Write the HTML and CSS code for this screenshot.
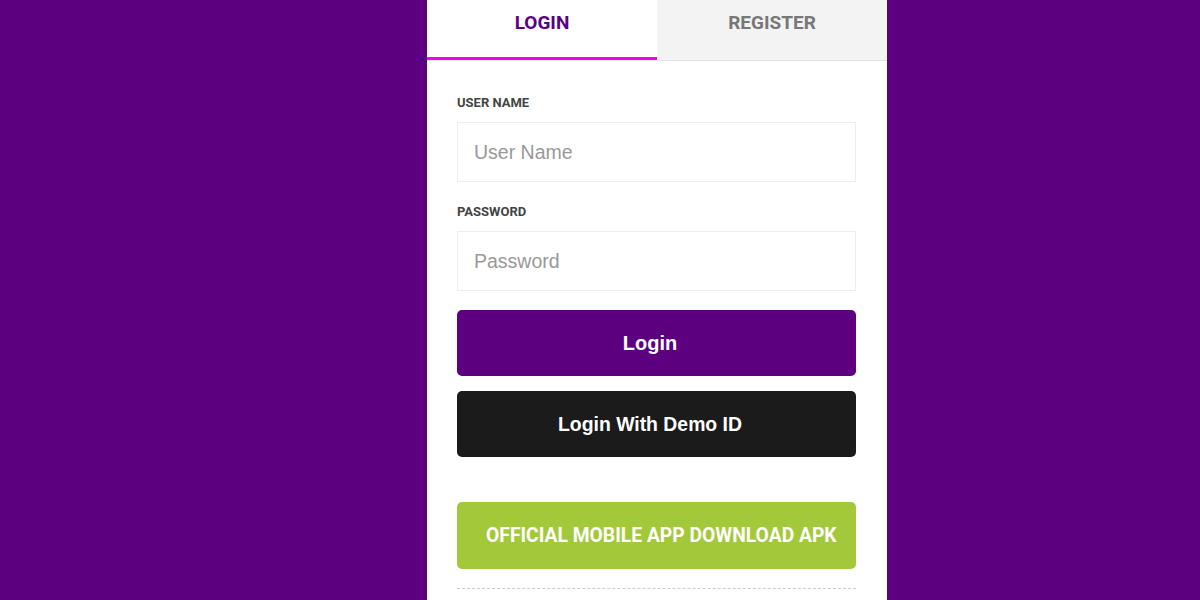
FILE: index.html
```html
<!DOCTYPE html>
<html lang="en">
<head>
  <meta charset="UTF-8" />
  <meta name="viewport" content="width=device-width, initial-scale=1.0"/>
  <title>Login / Register</title>
  <link rel="stylesheet" href="styles.css">
</head>
<body>
  <div class="page">
    <div class="card">
      <!-- Tabs -->
      <div class="tabs">
        <div class="tab active">LOGIN</div>
        <div class="tab">REGISTER</div>
      </div>

      <!-- Login form -->
      <div class="form">
        <label for="username">USER NAME</label>
        <input type="text" id="username" placeholder="User Name" />
        <label for="password">PASSWORD</label>
        <input type="password" id="password" placeholder="Password" />
        <button class="btn btn-login">Login</button>
        <button class="btn btn-demo">Login With Demo ID</button>
        <button class="btn btn-apk">OFFICIAL MOBILE APP DOWNLOAD APK</button>
        <div class="divider"></div>
      </div>
    </div>
  </div>
</body>
</html>
```
FILE: styles.css
```css
    * {
      box-sizing: border-box;
    }

    html, body {
      margin: 0;
      padding: 0;
      font-family: Roboto, Arial, sans-serif;
      background-color: #5c0080;
    }

    .page {
      width: 1200px;
      height: 600px;
      overflow: hidden;
    }

    .card {
      width: 460px;
      height: 600px;
      margin-left: 427px;
      background: #fff;
    }

    /* Tabs */
    .tabs {
      display: flex;
      border-bottom: 1px solid #e3e3e3;
    }

    .tab {
      flex: 1;
      height: 60px;
      padding-top: 11px;
      text-align: center;
      font-size: 19px;
      font-weight: 700;
      color: #777;
      background: #f3f3f3;
    }

    .tab.active {
      background: #fff;
      color: #5c0080;
      border-bottom: 3px solid #f000f0;
    }

    /* Form */
    .form {
      padding: 34px 31px 0 30px;
      display: flex;
      flex-direction: column;
    }

    label {
      font-size: 13px;
      line-height: 16px;
      font-weight: 700;
      color: #444;
      margin-bottom: 11px;
    }

    input {
      width: 100%;
      height: 60px;
      padding: 0 16px;
      border: 1px solid #eee;
      font-family: "Liberation Sans", Arial, sans-serif;
      font-size: 19.5px;
      color: #333;
      margin-bottom: 22px;
      outline: none;
    }

    input::placeholder {
      color: #999;
    }

    .btn {
      width: 100%;
      height: 66px;
      border: none;
      border-radius: 5px;
      color: #fff;
      font-family: "Liberation Sans", Arial, sans-serif;
      font-size: 20px;
      font-weight: 700;
      padding: 0 13px 0 0;
      cursor: pointer;
    }

    .btn-login {
      background-color: #5c0080;
      margin-top: -3px;
    }

    .btn-demo {
      background-color: #1b1b1b;
      margin-top: 15px;
      font-size: 19.4px;
    }

    .btn-apk {
      background-color: #a3c93a;
      margin-top: 45px;
      height: 67px;
      font-family: Roboto, Arial, sans-serif;
      font-size: 19.3px;
      text-align: left;
      padding: 0 0 0 29px;
    }

    .divider {
      margin-top: 19px;
      border-top: 1px dashed #ccc;
    }
```
